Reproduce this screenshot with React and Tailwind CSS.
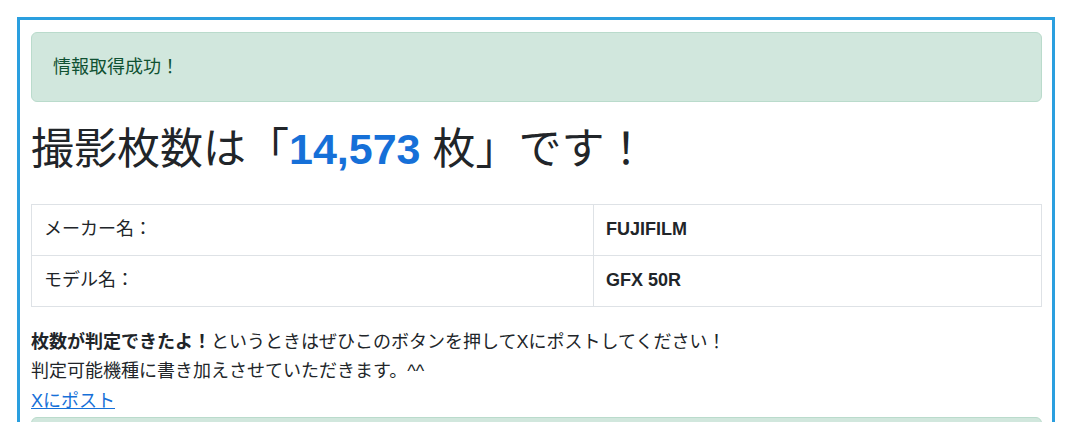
import React from "react";

const rows = [
  { label: "メーカー名：", value: "FUJIFILM" },
  { label: "モデル名：", value: "GFX 50R" },
];

export default function App() {
  return (
    <div
      className="h-[422px] overflow-hidden bg-white pt-[17px] pl-[17px] text-[18px] leading-[1.5] text-[#212529]"
      style={{ fontFamily: '"Liberation Sans", "Noto Sans CJK JP", sans-serif' }}
    >
      <div className="w-[1038px] border-[3px] border-[#2a9fdf] pt-[12px] pl-[11px] pr-[10px]">
        {/* Success alert */}
        <div className="rounded-[6px] border border-[#badbcc] bg-[#d1e7dd] px-[21px] pt-[21px] pb-[20px] text-[#0f5132]">
          情報取得成功！
        </div>

        {/* Shot count */}
        <h1 className="mt-[22px] text-[43px] leading-[1.2] font-normal">
          撮影枚数は「
          <span className="font-bold text-[#1670d8]">14,573</span> 枚」です！
        </h1>

        {/* Camera info */}
        <table className="mt-[28px] w-full border-collapse">
          <tbody>
            {rows.map((r) => (
              <tr key={r.label}>
                <td className="w-[562px] border border-[#dee2e6] px-3 py-[11.5px]">{r.label}</td>
                <td className="border border-[#dee2e6] px-3 py-[11.5px] font-bold">{r.value}</td>
              </tr>
            ))}
          </tbody>
        </table>

        <p className="mt-[21px] leading-[1.64]">
          <b>枚数が判定できたよ！</b>というときはぜひこのボタンを押してXにポストしてください！
          <br />
          判定可能機種に書き加えさせていただきます。^^
          <br />
          <a href="#" className="text-[#1670d8] underline">
            Xにポスト
          </a>
        </p>

        <div className="mt-[1px] h-[40px] rounded-[6px] border border-[#badbcc] bg-[#d1e7dd]" />
      </div>
    </div>
  );
}
